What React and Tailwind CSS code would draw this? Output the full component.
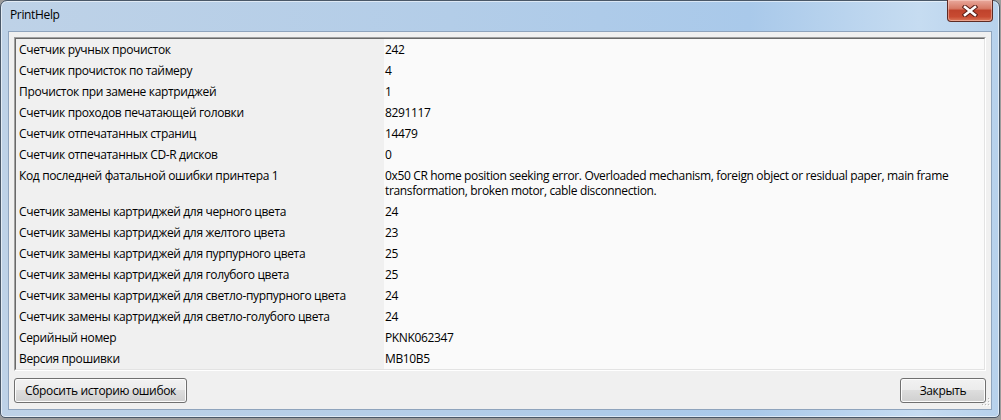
import React from "react";

const rows = [
  ["Счетчик ручных прочисток", "242"],
  ["Счетчик прочисток по таймеру", "4"],
  ["Прочисток при замене картриджей", "1"],
  ["Счетчик проходов печатающей головки", "8291117"],
  ["Счетчик отпечатанных страниц", "14479"],
  ["Счетчик отпечатанных CD-R дисков", "0"],
  [
    "Код последней фатальной ошибки принтера 1",
    [
      "0x50 CR home position seeking error. Overloaded mechanism, foreign object or residual paper, main frame",
      "transformation, broken motor, cable disconnection.",
    ],
  ],
  ["Счетчик замены картриджей для черного цвета", "24"],
  ["Счетчик замены картриджей для желтого цвета", "23"],
  ["Счетчик замены картриджей для пурпурного цвета", "25"],
  ["Счетчик замены картриджей для голубого цвета", "25"],
  ["Счетчик замены картриджей для светло-пурпурного цвета", "24"],
  ["Счетчик замены картриджей для светло-голубого цвета", "24"],
  ["Серийный номер", "PKNK062347"],
  ["Версия прошивки", "MB10B5"],
];

function CloseGlyph() {
  return (
    <svg width="16" height="12" viewBox="0 0 16 12">
      <path d="M3 2 L13 10 M13 2 L3 10" stroke="#5a1f18" strokeWidth="4.6" strokeLinecap="square" />
      <path d="M3 2 L13 10 M13 2 L3 10" stroke="#ffffff" strokeWidth="2.6" strokeLinecap="square" />
    </svg>
  );
}

function Grip() {
  return (
    <svg width="10" height="10" viewBox="0 0 10 10">
      {[
        [8, 0],
        [8, 3],
        [5, 3],
        [8, 6],
        [5, 6],
        [2, 6],
      ].map(([x, y], i) => (
        <g key={i}>
          <rect x={x + 1} y={y + 1} width="1" height="1" fill="#ffffff" />
          <rect x={x} y={y} width="1" height="1" fill="#b8b8b8" />
        </g>
      ))}
    </svg>
  );
}

function WinButton({ children, className = "" }) {
  return (
    <button
      className={
        "h-[25px] rounded-[3px] border border-[#707070] bg-[linear-gradient(#f2f2f2_0%,#ebebeb_50%,#dddddd_50%,#cfcfcf_100%)] text-[12px] tracking-[-0.35px] text-black shadow-[inset_0_0_0_1px_#fcfcfc] " +
        className
      }
    >
      {children}
    </button>
  );
}

export default function App() {
  return (
    <div
      className="w-[1001px] h-[420px] bg-[#9c9c9c] overflow-hidden"
      style={{ fontFamily: '"Open Sans", "Noto Sans", sans-serif' }}
    >
      <div className="relative w-[1000px] h-[418px] flex flex-col rounded-t-[7px] rounded-b-[5px] border border-[#4a5868] bg-[linear-gradient(90deg,#bed2e7_0%,#b3cde8_45%,#a9c9ea_75%,#c6dcf1_92%,#b7d1ec_100%)] px-[7px] pb-[7px] shadow-[inset_0_0_0_1px_rgba(255,255,255,0.55)]">
        {/* title bar */}
        <div className="flex h-[30px] shrink-0 items-start justify-between">
          <span className="pl-[2px] pt-[6px] text-[12px] leading-[16px] tracking-[-0.35px] text-black">PrintHelp</span>
          <div className="-mt-px mr-[-1px] flex h-[22px] w-[46px] items-center justify-center rounded-b-[4px] border border-t-0 border-[#5d2a24] bg-[linear-gradient(#e9a99d_0%,#d77a66_40%,#c0432c_50%,#c84b32_80%,#dc7a5c_100%)] shadow-[inset_0_0_0_1px_rgba(255,220,210,0.45)]">
            <CloseGlyph />
          </div>
        </div>

        {/* client area */}
        <div className="relative flex flex-1 flex-col border border-[#8fa4bd] bg-[#f0f0f0] px-[5px] pt-[5px]">
          <div className="border border-t-[#a0a0a0] border-l-[#a0a0a0] border-r-[#ffffff] border-b-[#ffffff]">
            <div className="border border-t-[#696969] border-l-[#696969] border-r-[#e3e3e3] border-b-[#e3e3e3]">
              {rows.map(([label, value], i) => (
                <div key={i} className="flex text-[12px] leading-[15px] tracking-[-0.35px] text-black">
                  <div className="w-[368px] shrink-0 bg-[#f0f0f0] pl-[3px] py-[3px] whitespace-nowrap">
                    {label}
                  </div>
                  <div className="flex-1 bg-[#fafafa] pl-[1px] py-[3px] whitespace-nowrap">
                    {Array.isArray(value)
                      ? value.map((line, j) => <div key={j}>{line}</div>)
                      : value}
                  </div>
                </div>
              ))}
            </div>
          </div>

          <div className="mt-[7px] flex items-start justify-between">
            <WinButton className="w-[173px]">Сбросить историю ошибок</WinButton>
            <WinButton className="w-[86px]">Закрыть</WinButton>
          </div>

          <div className="absolute right-[1px] bottom-[1px]">
            <Grip />
          </div>
        </div>
      </div>
    </div>
  );
}
